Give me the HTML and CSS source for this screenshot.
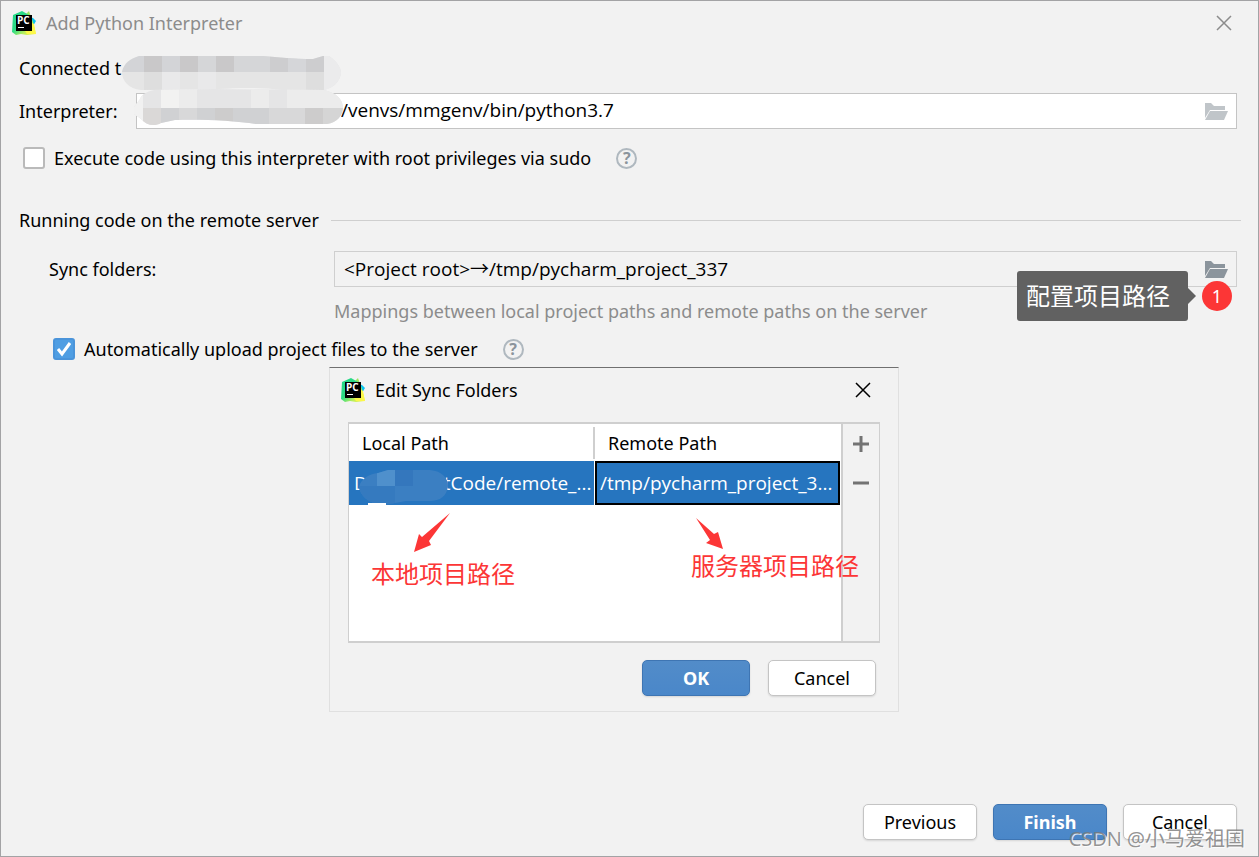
FILE: index.html
```
<!DOCTYPE html>
<html lang="en">

<head>
    <meta charset="UTF-8">
    <meta name="viewport" content="width=device-width, initial-scale=1.0">
    <title>Add Python Interpreter</title>
    <link rel="stylesheet" href="styles.css">
</head>

<body>
    <!-- shared icons -->
    <svg class="sprite" aria-hidden="true">
        <defs>
            <linearGradient id="pcGreen" x1="0" y1="0" x2="1" y2="1">
                <stop offset="0" stop-color="#21d789"/>
                <stop offset="0.45" stop-color="#2fdb85"/>
                <stop offset="0.7" stop-color="#b9ee5c"/>
                <stop offset="1" stop-color="#fcf84a"/>
            </linearGradient>
        </defs>
        <symbol id="icon-pycharm" viewBox="0 0 24 24">
            <path d="M17 6l4 1 3 3-3 5-6-3z" fill="#07c3f2"/>
            <path d="M17 0l2 6-7-1z" fill="#9be85e"/>
            <path d="M1 4l9-4 7 4 3 4 1 3 3 12-9 1-6-1-5 1-4-3z" fill="url(#pcGreen)"/>
            <path d="M20 12l2 1 2 10-9 0-2-3 7-1z" fill="#fcf84a"/>
            <rect x="4" y="4" width="16" height="16" fill="#000"/>
            <rect x="6" y="16" width="6" height="1" fill="#fff"/>
        </symbol>
        <symbol id="icon-folder" viewBox="0 0 24 18">
            <path d="M1 0h6l3 3h11v4H6l-5 8z"/>
            <path d="M6 8h18l-4 9H1z"/>
        </symbol>
        <symbol id="icon-close" viewBox="0 0 16 16">
            <path d="M1 1l14 14M15 1L1 15" fill="none" stroke="currentColor" stroke-width="1.5"/>
        </symbol>
    </svg>

    <div class="window">
        <header class="titlebar">
            <div class="app-icon"><svg><use href="#icon-pycharm"/></svg><span>PC</span></div>
            <h1>Add Python Interpreter</h1>
            <button class="close" type="button" aria-label="Close"><svg><use href="#icon-close"/></svg></button>
        </header>

        <main class="form">
            <div class="connected">
                <span>Connected t</span>
                <svg class="mask mask-host" viewBox="0 0 220 36">
                    <clipPath id="hostClip">
                        <path d="M18 1H142C158 2 172 4 192 4L202 1H208C218 8 220 14 220 18C219 26 212 34 202 35H160C140 32 115 33 98 34L20 35C8 34 1 26 1 17C3 8 9 4 18 1z"/>
                    </clipPath>
                    <g clip-path="url(#hostClip)">
                        <rect width="220" height="36" fill="#e5e5e5"/>
                        <path d="M0 0h23v17H0zM41 0h18v17H41z" fill="#d3d4d7"/>
                        <path d="M23 0h18v17H23zM59 0h18v17H59zM95 0h18v17H95z" fill="#c9c8c9"/>
                        <path d="M77 0h18v17H77zM113 0h36v17h-36z" fill="#d5d6d8"/>
                        <path d="M149 0h18v17h-18zM185 0h18v17h-18z" fill="#cdcdcf"/>
                        <path d="M167 0h18v17h-18z" fill="#d5d6d9"/>
                        <path d="M203 0h17v17h-17zM203 17h17v19h-17z" fill="#ebebec"/>
                        <path d="M23 17h18v19H23zM185 17h18v19h-18z" fill="#dedede"/>
                        <path d="M41 17h18v19H41zM77 17h18v19H77z" fill="#e9e9ea"/>
                    </g>
                </svg>
            </div>

            <div class="interpreter">
                <label for="interpreter">Interpreter:</label>
                <div class="field">
                    <input id="interpreter" class="path" type="text" value="/venvs/mmgenv/bin/python3.7">
                    <button class="browse" type="button" aria-label="Browse interpreter" disabled><svg><use href="#icon-folder"/></svg></button>
                    <svg class="mask mask-path" viewBox="0 0 212 38">
                        <clipPath id="pathClip">
                            <path d="M20 1L80 0L190 1C202 4 208 9 209 18C209 26 203 34 193 35H122C100 31 60 30 41 31L27 34C20 38 12 36 7 30L0 25V18L6 10C8 5 12 3 20 1z"/>
                        </clipPath>
                        <g clip-path="url(#pathClip)">
                            <rect width="212" height="38" fill="#e5e5e6"/>
                            <path d="M0 0h9v38H0z" fill="#f1f1f1"/>
                            <path d="M27 0h18v19H27z" fill="#f2f2f1"/>
                            <path d="M45 0h18v19H45zM117 0h18v19h-18zM153 0h60v19h-60z" fill="#ececec"/>
                            <path d="M9 19h18v19H9z" fill="#dad8d7"/>
                            <path d="M27 19h18v19H27zM63 19h18v19H63zM99 19h36v19H99z" fill="#d0d1d3"/>
                            <path d="M45 19h18v19H45zM135 19h36v19h-36z" fill="#d8d8d9"/>
                            <path d="M81 19h18v19H81zM171 19h18v19h-18z" fill="#cdcccc"/>
                            <path d="M189 19h23v19h-23z" fill="#d5d5d5"/>
                        </g>
                    </svg>
                </div>
            </div>

            <div class="check-row">
                <input id="sudo" type="checkbox">
                <label for="sudo">Execute code using this interpreter with root privileges via sudo</label>
                <button class="help" type="button" aria-label="Help">?</button>
            </div>

            <h2 class="section-title">Running code on the remote server</h2>

            <div class="sync">
                <label for="sync">Sync folders:</label>
                <div class="field">
                    <input id="sync" type="text" value="&lt;Project root&gt;→/tmp/pycharm_project_337" readonly>
                    <button class="browse" type="button" aria-label="Edit sync folders"><svg><use href="#icon-folder"/></svg></button>
                    <div class="callout" lang="zh">配置项目路径</div>
                    <div class="step">1</div>
                </div>
                <p class="hint">Mappings between local project paths and remote paths on the server</p>
            </div>

            <div class="check-row upload">
                <input id="upload" type="checkbox" checked>
                <label for="upload">Automatically upload project files to the server</label>
                <button class="help" type="button" aria-label="Help">?</button>
            </div>
        </main>

        <footer class="actions">
            <button class="btn" type="button">Previous</button>
            <button class="btn primary" type="button">Finish</button>
            <button class="btn" type="button">Cancel</button>
        </footer>

        <section class="dialog" role="dialog" aria-labelledby="dialogTitle">
            <header class="dialog-title">
                <div class="app-icon"><svg><use href="#icon-pycharm"/></svg><span>PC</span></div>
                <h2 id="dialogTitle">Edit Sync Folders</h2>
                <button class="close" type="button" aria-label="Close"><svg><use href="#icon-close"/></svg></button>
            </header>

            <div class="mappings">
                <div class="table-area">
                    <table>
                        <thead>
                            <tr>
                                <th>Local Path</th>
                                <th>Remote Path</th>
                            </tr>
                        </thead>
                        <tbody>
                            <tr>
                                <td class="local">
                                    <span>D</span><span>tCode/remote_...</span>
                                    <svg class="mask mask-local" viewBox="0 0 92 36">
                                        <clipPath id="localClip">
                                            <path d="M30 1H72C84 2 90 9 90 17C89 27 82 32 72 32H48L26 36C10 35 2 26 1 18C3 9 12 5 20 4z"/>
                                        </clipPath>
                                        <g clip-path="url(#localClip)">
                                            <rect width="92" height="36" fill="#3b7fc2"/>
                                            <path d="M19 0h18v17H19z" fill="#4f90cc"/>
                                            <path d="M37 0h18v17H37z" fill="#3477bd"/>
                                            <path d="M0 17h37v19H0z" fill="#357abf"/>
                                        </g>
                                        <path d="M10 34h18v2H10z" fill="#fff"/>
                                    </svg>
                                </td>
                                <td class="editing">/tmp/pycharm_project_3...</td>
                            </tr>
                        </tbody>
                    </table>
                </div>
                <div class="tools">
                    <button type="button" aria-label="Add"><svg viewBox="0 0 16 16"><path d="M0 8h16M8 0v16"/></svg></button>
                    <button type="button" aria-label="Remove"><svg viewBox="0 0 16 16"><path d="M0 8h16"/></svg></button>
                </div>
                <div class="note note-local" lang="zh">
                    <svg viewBox="0 0 36 40"><path d="M36 0L15 28L17 32L0 39L5 21L8 24z"/></svg>
                    <span>本地项目路径</span>
                </div>
                <div class="note note-remote" lang="zh">
                    <svg viewBox="0 0 28 32"><path d="M0 0L18 16L22 14L27 31L10 25L14 22z"/></svg>
                    <span>服务器项目路径</span>
                </div>
            </div>

            <div class="dialog-actions">
                <button class="btn primary" type="button">OK</button>
                <button class="btn" type="button">Cancel</button>
            </div>
        </section>

        <div class="watermark" lang="zh">CSDN @小马爱祖国</div>
    </div>
</body>

</html>
```
FILE: styles.css
```
:root {
    --bg: #f2f2f2;
    --border: #c4c4c4;
    --line: #cfcfcf;
    --selection: #2675bf;
    --red: #fc3636;
}

* {
    box-sizing: border-box;
}

body {
    margin: 0;
    background-color: var(--bg);
    color: #000;
    font-family: "Noto Sans", "Noto Sans CJK SC", sans-serif;
    font-size: 18px;
    line-height: 26px;
}

h1,
h2,
p {
    margin: 0;
    font-size: 18px;
    font-weight: normal;
}

button,
input {
    font: inherit;
    color: inherit;
}

button {
    padding: 0;
    border: none;
    background: none;
}

.sprite {
    position: absolute;
    width: 0;
    height: 0;
}

.window {
    position: relative;
    display: flex;
    flex-direction: column;
    min-height: 100vh;
    border: 1px solid #a3a3a5;
}

/* title bars */
.titlebar,
.dialog-title {
    display: flex;
    align-items: center;
    gap: 10px;
    height: 44px;
    padding: 0 26px 0 11px;
}

.titlebar {
    color: #8c8c8c;
}

.app-icon {
    position: relative;
    width: 24px;
    height: 24px;
}

.app-icon svg {
    display: block;
    width: 24px;
    height: 24px;
}

.app-icon span {
    position: absolute;
    top: 3px;
    left: 5px;
    color: #fff;
    font-family: "Open Sans", sans-serif;
    font-size: 10px;
    font-weight: bold;
    line-height: 12px;
}

.close {
    display: flex;
    margin-left: auto;
}

.close svg {
    width: 16px;
    height: 16px;
}

/* form */
.form {
    flex: 1;
    padding: 10px 21px 0 18px;
}

.connected,
.field {
    position: relative;
}

.interpreter {
    display: flex;
    align-items: center;
    margin-top: 12px;
}

.interpreter label {
    width: 117px;
}

.interpreter .field {
    flex: 1;
}

.field input,
td {
    font-family: "Open Sans", "Noto Sans", sans-serif;
    font-size: 19px;
}

.field input {
    display: block;
    width: 100%;
    height: 36px;
    padding: 0 48px 2px 9px;
    border: 1px solid var(--border);
    outline: none;
    background-color: #fff;
}

.field input.path {
    padding-left: 204px;
}

.field input[readonly] {
    border-color: var(--line);
    background-color: var(--bg);
    font-family: "Open Sans", "Noto Sans CJK SC", sans-serif;
}

.browse {
    position: absolute;
    top: 10px;
    right: 9px;
    display: flex;
    fill: #8b949c;
}

.browse:disabled {
    fill: #c0c5c9;
}

.browse svg {
    width: 24px;
    height: 18px;
}

.check-row {
    display: flex;
    align-items: center;
    margin-top: 16px;
    padding-left: 4px;
}

.check-row input {
    appearance: none;
    width: 22px;
    height: 22px;
    margin: 0 9px 0 0;
    border: 2px solid #bababa;
    border-radius: 3px;
    background-color: #fff;
}

.check-row input:checked {
    border-color: #4a94da;
    background: #4f9ee3 url("data:image/svg+xml,%3Csvg xmlns='http://www.w3.org/2000/svg' viewBox='0 0 18 18'%3E%3Cpath d='M3 9l4 5 8-11' fill='none' stroke='white' stroke-width='3'/%3E%3C/svg%3E") center / 18px no-repeat;
}

.help {
    width: 21px;
    height: 21px;
    margin-left: 25px;
    border: 2px solid #afb8bf;
    border-radius: 50%;
    color: #8b949c;
    font-size: 16px;
    font-weight: bold;
    line-height: 17px;
}

.section-title {
    display: flex;
    align-items: center;
    gap: 12px;
    margin-top: 36px;
    margin-right: -4px;
}

.section-title::after {
    content: "";
    flex: 1;
    border-top: 1px solid var(--line);
}

.sync {
    display: grid;
    grid-template-columns: 285px 1fr;
    align-items: center;
    row-gap: 11px;
    margin-top: 18px;
    padding-left: 30px;
}

.hint {
    grid-column: 2;
    color: #8c8c8c;
}

.upload {
    margin-top: 12px;
    padding-left: 34px;
}

.callout {
    position: absolute;
    top: 20px;
    right: 49px;
    padding: 9px 18px 9px 9px;
    border-radius: 3px;
    background-color: #616161;
    color: #fff;
    font-size: 24px;
    line-height: 32px;
}

.callout::after {
    content: "";
    position: absolute;
    top: 17px;
    left: 100%;
    border: 8px solid transparent;
    border-left-color: #616161;
    border-right: none;
}

.step {
    position: absolute;
    top: 30px;
    right: 5px;
    width: 30px;
    height: 30px;
    border-radius: 50%;
    background-color: var(--red);
    color: #fff;
    line-height: 30px;
    text-align: center;
}

/* blurred out private data */
.mask {
    position: absolute;
}

.mask-host {
    top: 0;
    left: 102px;
    width: 220px;
    height: 36px;
}

.mask-path {
    top: -4px;
    left: -2px;
    width: 212px;
    height: 38px;
}

.mask-local {
    top: 8px;
    left: 9px;
    width: 92px;
    height: 36px;
}

/* buttons */
.actions,
.dialog-actions {
    display: flex;
    justify-content: flex-end;
    gap: 16px;
}

.actions {
    padding: 0 21px 16px;
}

.btn {
    width: 114px;
    height: 36px;
    border: 1px solid var(--border);
    border-radius: 5px;
    background-color: #fff;
    box-shadow: 0 1px 2px rgba(0, 0, 0, 0.12);
}

.btn.primary {
    border-color: #3e75b3;
    background: linear-gradient(#528cc9, #4a87c9);
    color: #fff;
    font-weight: bold;
}

/* edit sync folders */
.dialog {
    position: absolute;
    top: 366px;
    left: 328px;
    width: 570px;
    padding-bottom: 15px;
    border: 1px solid #e0e0e0;
    border-top-color: #707070;
    background-color: var(--bg);
}

.dialog-title {
    padding-right: 27px;
}

.mappings {
    position: relative;
    display: flex;
    height: 221px;
    margin: 10px 18px 0;
    border: 1px solid var(--line);
    border-width: 2px 1px 2px 1px;
}

.table-area {
    flex: 1;
    background-color: #fff;
}

table {
    width: 100%;
    table-layout: fixed;
    border-collapse: separate;
    border-spacing: 0;
}

th,
td {
    padding: 0;
    font-weight: normal;
    text-align: left;
    white-space: nowrap;
}

th {
    height: 37px;
    padding-left: 13px;
    background: linear-gradient(var(--line), var(--line)) right center / 2px 32px no-repeat;
}

th:last-child {
    background: none;
}

td {
    position: relative;
    height: 44px;
    padding-left: 5px;
    border-right: 1px solid #fff;
    background-color: var(--selection);
    background-clip: padding-box;
    color: #fff;
}

.local span + span {
    margin-left: 76px;
}

.editing {
    box-shadow: inset 0 0 0 2px #000;
}

.tools {
    display: flex;
    flex-direction: column;
    gap: 23px;
    align-items: center;
    width: 38px;
    padding-top: 12px;
    border-left: 2px solid var(--line);
}

.tools button,
.tools svg {
    display: block;
    width: 16px;
    height: 16px;
}

.tools path {
    stroke: #737373;
    stroke-width: 3;
}

.dialog-actions {
    gap: 18px;
    margin: 17px 22px 0;
}

.dialog-actions .btn {
    width: 108px;
}

/* red annotations */
.note {
    position: absolute;
    display: flex;
    flex-direction: column;
    color: var(--red);
    fill: var(--red);
    font-size: 24px;
    line-height: 32px;
    white-space: nowrap;
}

.note-local {
    top: 89px;
    left: 22px;
    gap: 5px;
}

.note-local svg {
    width: 36px;
    height: 40px;
    margin-left: 43px;
}

.note-remote {
    top: 94px;
    left: 342px;
}

.note-remote svg {
    width: 28px;
    height: 32px;
    margin-left: 5px;
}

.watermark {
    position: absolute;
    right: 13px;
    bottom: 4px;
    color: rgba(120, 120, 120, 0.8);
    font-family: "Open Sans", "Noto Sans CJK SC", sans-serif;
    font-size: 20px;
    text-shadow: 1px 1px 0 rgba(255, 255, 255, 0.8);
    white-space: nowrap;
    pointer-events: none;
}
```
